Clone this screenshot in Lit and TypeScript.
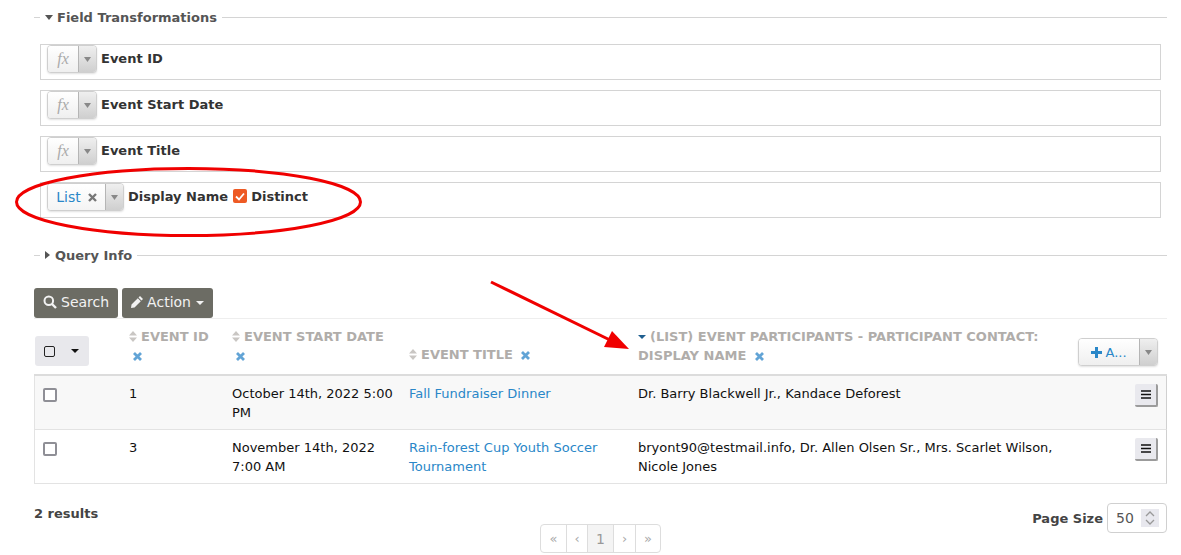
import { LitElement, html, css, svg } from "lit";
import { customElement } from "lit/decorators.js";

const caret = html`<svg class="dd" width="7" height="5" viewBox="0 0 7 5"><path d="M0 0h7L3.500 5z" fill="#888"/></svg>`;
const sortIcon = html`<svg class="sort" width="8" height="11" viewBox="0 0 8 11"><path d="M4 0l4 4.500H0zM4 11L0 6.500h8z" fill="#c9c6c3"/></svg>`;
const xIcon = html`<svg class="x" width="9" height="9" viewBox="0 0 9 9"><path d="M1 1l7 7M8 1l-7 7" stroke="#62a4d6" stroke-width="2.800"/></svg>`;

@customElement("app-root")
export class AppRoot extends LitElement {
  static styles = css`
    :host { display: block; position: relative; width: 1181px; height: 555px; overflow: hidden; background: #fff;
      font-family: "DejaVu Sans", sans-serif; font-size: 13px; color: #222; }
    .page { display: flex; flex-direction: column; padding: 0 14px 0 34px; }
    .legend { display: flex; align-items: center; height: 18px; font-weight: 700; color: #555; font-size: 13px; }
    .legend .line { flex: 1; height: 1px; background: #d4d4d4; }
    .legend .lead { width: 6px; height: 1px; background: #d4d4d4; margin-right: 5px; }
    .legend .label { margin: 0 5px 0 0; display: flex; align-items: center; gap: 4px; }
    .legend .cr { margin-right: 1px; }
    .l1 { margin-top: 8px; }
    .rows { display: flex; flex-direction: column; gap: 10px; margin: 18px 6px 0; }
    .row { height: 36px; box-sizing: border-box; border: 1px solid #d4d4d4; padding: 0 6px; display: flex; align-items: flex-start; gap: 4px;
      font-weight: 700; color: #333; }
    .row .t { line-height: 28px; }
    .split { display: flex; height: 28px; box-sizing: border-box; border: 1px solid #cfcfcf; border-radius: 4px;
      box-shadow: 0 1px 2px rgba(0,0,0,.12); background: #fff; flex: none; }
    .split .main { display: flex; align-items: center; justify-content: center; background: linear-gradient(#fff,#efefef); font-weight: 400; border-radius: 3px 0 0 3px; }
    .split .fx { width: 30px; font-family: "Liberation Serif", serif; font-style: italic; font-size: 16px; color: #aaa; }
    .split .side { width: 17px; display: flex; align-items: center; justify-content: center; border-left: 1px solid #b5b5b5; background: linear-gradient(#efefef,#cfcfcf); border-radius: 0 3px 3px 0; }
    .split .list { width: 57px; color: #2a87c8; font-size: 14px; gap: 7px; box-sizing: border-box; background: linear-gradient(#fff,#f4f4f4); }
    .split .list svg { margin-top: 1px; }
    .check { width: 14px; height: 14px; margin: 6px 0 0 1px; border-radius: 2px; background: #ee5a24; display: inline-flex; align-items: center; justify-content: center; }
    .ql { margin-top: 28px; }
    .toolbar { display: flex; gap: 4px; margin-top: 24px; height: 30px; }
    .btn { display: flex; align-items: center; gap: 4px; padding: 0 9px 2px; background: #6c6c64; color: #f2f2f2; border-radius: 3px; font-size: 14px; height: 30px; box-sizing: border-box; }
    .tcaret { width: 0; height: 0; border: 4px solid transparent; border-top-color: #f2f2f2; border-bottom: 0; margin: 2px 0 0 1px; }
    .table { display: grid; grid-template-columns: 86px 103px 177px 229px 1fr; }
    .hd { height: 58px; box-sizing: border-box; border-top: 1px solid #eee; border-bottom: 2px solid #dcdcdc; padding: 0 0 10px 9px; font-weight: 700; color: #b0adaa;
      font-size: 13px; line-height: 19px; display: flex; flex-direction: column; justify-content: flex-end; }
    .hd.top { justify-content: flex-start; padding-top: 8px; padding-bottom: 0; }
    .hd .sort { margin-right: 4px; vertical-align: -1px; }
    .hd .dn { margin-right: 4px; vertical-align: 2px; }
    .hd .x { margin-left: 4px; vertical-align: -1px; }
    .hd.top .x { display: block; margin-top: 6px; }
    .hd.top .wide { width: 410px; }
    .hd.top .wide .x { display: inline; margin-top: 0; }
    .hd.sel { padding: 0; justify-content: flex-start; }
    .selbox { width: 54px; height: 30px; margin: 17px 0 0 1px; background: #e8e8ec; border-radius: 3px; display: flex; align-items: center; gap: 16px; padding-left: 9px; box-sizing: border-box; }
    .box { width: 9px; height: 9px; border: 1.500px solid #222; border-radius: 2px; }
    .selcaret { width: 0; height: 0; border: 4px solid transparent; border-top-color: #111; border-bottom: 0; }
    .hd.act { position: relative; }
    .addwrap { position: absolute; right: 9px; top: 19px; }
    .add { width: 60px; color: #2a87c8; gap: 3px; font-size: 13px; background: linear-gradient(#fff,#f4f4f4); }
    .td { padding: 8px 4px 0 9px; line-height: 19px; height: 45px; border-bottom: 1px solid #e3e3e3; color: #111; }
    .odd { background: #f8f8f8; }
    .td.first { border-left: 1px solid #e3e3e3; padding-left: 8px; padding-top: 12px; height: 41px; }
    .td.last { border-right: 1px solid #d0d0d0; position: relative; }
    .td a { color: #2a87c8; }
    .cb { display: block; width: 10px; height: 10px; border: 2px solid #8f8f96; border-radius: 2px; background: #fff; }
    .menu { position: absolute; right: 8px; top: 8px; width: 23px; height: 23px; background: #e9e9ee; border-right: 2px solid #9b9b9b; border-bottom: 2px solid #9b9b9b; border-radius: 2px; box-sizing: border-box; display: flex; align-items: center; justify-content: center; }
    .wrapmail { width: 430px; }
    .foot { display: flex; justify-content: space-between; align-items: flex-start; margin-top: 22px; font-weight: 700; color: #444; }
    .ps { display: flex; align-items: center; gap: 4px; margin-top: -3px; }
    .num { width: 60px; height: 30px; box-sizing: border-box; border: 1px solid #d0d0d0; border-radius: 4px; display: flex; align-items: center; padding: 0 7px 0 8px; font-weight: 400; color: #555; font-size: 14px; justify-content: space-between; }
    .spin { width: 18px; height: 18px; background: #e8e8ee; display: flex; align-items: center; justify-content: center; }
    .pager { position: absolute; left: 540px; top: 524px; display: flex; height: 29px; box-sizing: border-box; border: 1px solid #ddd; border-radius: 4px; color: #aaa; font-weight: 400; }
    .pager span { box-sizing: border-box; display: flex; align-items: center; justify-content: center; border-left: 1px solid #ddd; }
    .pager span:first-child { border-left: 0; }
    .pager .on { background: #f4f4f4; color: #999; font-size: 14px; }
    .annot { position: absolute; left: 0; top: 0; pointer-events: none; }
  `;

  split(label: unknown) {
    return html`<div class="split">${label}<div class="side">${caret}</div></div>`;
  }

  row(name: string) {
    return html`<div class="row">${this.split(html`<div class="main fx">fx</div>`)}<span class="t">${name}</span></div>`;
  }

  menu() {
    return html`<div class="menu"><svg width="10" height="9" viewBox="0 0 10 9"><path d="M0 1h10M0 4.500h10M0 8h10" stroke="#111" stroke-width="1.600"/></svg></div>`;
  }

  render() {
    return html`
      <div class="page">
        <div class="legend l1"><span class="lead"></span><span class="label"><svg width="8" height="5" viewBox="0 0 8 5"><path d="M0 0h8L4 5z" fill="#555"/></svg>Field Transformations</span><span class="line"></span></div>
        <div class="rows">
          ${this.row("Event ID")}
          ${this.row("Event Start Date")}
          ${this.row("Event Title")}
          <div class="row">
            ${this.split(html`<div class="main list">List <svg width="9" height="9" viewBox="0 0 9 9"><path d="M1 1l7 7M8 1l-7 7" stroke="#777" stroke-width="2.400"/></svg></div>`)}
            <span class="t">Display Name</span>
            <span class="check"><svg width="10" height="9" viewBox="0 0 10 9"><path d="M1 4.500l3 3 5-6" fill="none" stroke="#fff" stroke-width="1.800"/></svg></span>
            <span class="t">Distinct</span>
          </div>
        </div>
        <div class="legend ql"><span class="lead"></span><span class="label"><svg class="cr" width="5" height="8" viewBox="0 0 5 8"><path d="M0 0l5 4-5 4z" fill="#555"/></svg>Query Info</span><span class="line"></span></div>
        <div class="toolbar">
          <div class="btn"><svg width="14" height="14" viewBox="0 0 14 14"><circle cx="5.800" cy="5.800" r="4.300" fill="none" stroke="#f2f2f2" stroke-width="2"/><path d="M9 9l4 4" stroke="#f2f2f2" stroke-width="2.400"/></svg>Search</div>
          <div class="btn"><svg width="12" height="12" viewBox="0 0 12 12"><path d="M9 0l3 3-1.500 1.500-3-3zM6.800 2.200l3 3L3.500 11.500 0 12l.5-3.500z" fill="#f2f2f2"/></svg>Action<span class="tcaret"></span></div>
        </div>
        <div class="table">
          <div class="hd sel"><div class="selbox"><span class="box"></span><span class="selcaret"></span></div></div>
          <div class="hd top"><div>${sortIcon}EVENT ID</div>${xIcon}</div>
          <div class="hd top"><div>${sortIcon}EVENT START DATE</div>${xIcon}</div>
          <div class="hd"><div>${sortIcon}EVENT TITLE ${xIcon}</div></div>
          <div class="hd top act"><div class="wide"><svg class="dn" width="8" height="4" viewBox="0 0 8 4"><path d="M0 0h8L4 4z" fill="#1f5f8f"/></svg>(LIST) EVENT PARTICIPANTS - PARTICIPANT CONTACT: DISPLAY NAME ${xIcon}</div>
            <div class="addwrap"><div class="split"><div class="main add"><svg width="11" height="11" viewBox="0 0 11 11"><path d="M5.500 0v11M0 5.500h11" stroke="#2a87c8" stroke-width="3"/></svg>A...</div><div class="side">${caret}</div></div></div>
          </div>

          <div class="td first odd"><span class="cb"></span></div>
          <div class="td odd">1</div>
          <div class="td odd">October 14th, 2022 5:00 PM</div>
          <div class="td odd"><a>Fall Fundraiser Dinner</a></div>
          <div class="td last odd">Dr. Barry Blackwell Jr., Kandace Deforest${this.menu()}</div>

          <div class="td first"><span class="cb"></span></div>
          <div class="td">3</div>
          <div class="td">November 14th, 2022 7:00 AM</div>
          <div class="td"><a>Rain-forest Cup Youth Soccer Tournament</a></div>
          <div class="td last"><div class="wrapmail">bryont90@testmail.info, Dr. Allen Olsen Sr., Mrs. Scarlet Wilson, Nicole Jones</div>${this.menu()}</div>
        </div>
        <div class="foot">
          <span>2 results</span>
          <div class="ps">Page Size <div class="num">50<span class="spin"><svg width="10" height="14" viewBox="0 0 10 14"><path d="M1 5l4-4 4 4M1 9l4 4 4-4" fill="none" stroke="#999" stroke-width="1.300"/></svg></span></div></div>
        </div>
      </div>
      <div class="pager">
        <span style="width:25px">«</span><span style="width:21px">‹</span><span class="on" style="width:26px">1</span><span style="width:22px">›</span><span style="width:25px">»</span>
      </div>
      <svg class="annot" width="1181" height="555" viewBox="0 0 1181 555">
        ${svg`<ellipse cx="188.500" cy="202" rx="172" ry="33.500" fill="none" stroke="#f00000" stroke-width="3"/>
        <path d="M491 282L612 341" stroke="#f00000" stroke-width="3" fill="none"/>
        <path d="M629 349L604 347L612 331z" fill="#f00000"/>`}
      </svg>
    `;
  }
}
